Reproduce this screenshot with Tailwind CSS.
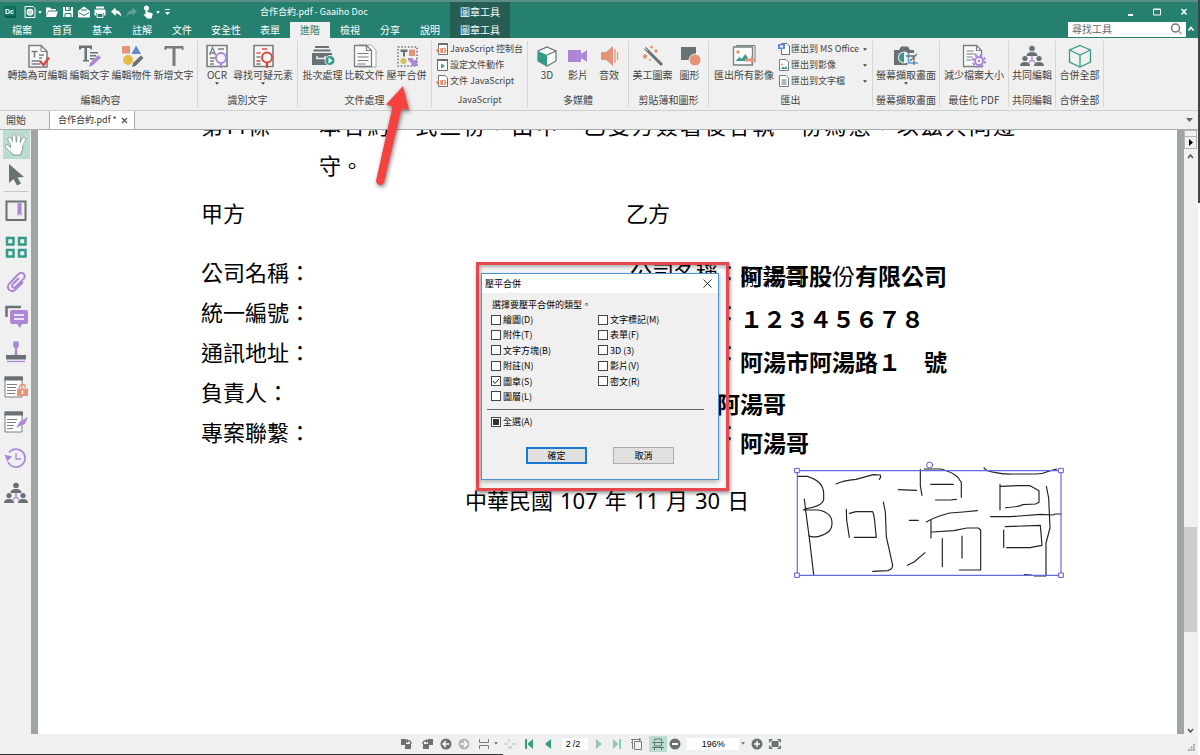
<!DOCTYPE html>
<html lang="zh-Hant">
<head>
<meta charset="utf-8">
<title>合作合約.pdf - Gaaiho Doc</title>
<script src="https://cdn.jsdelivr.net/npm/@tailwindcss/browser@4"></script>
</head>
<body class="h-screen overflow-hidden flex bg-white text-[10px] leading-[14px] text-[#444] font-['Noto_Sans_CJK_TC',sans-serif]">
<svg class="hidden">
  <symbol id="caret" viewBox="0 0 6 4"><path d="M0 0h6L3 4z" fill="currentColor"/></symbol>
  <symbol id="people" viewBox="0 0 24 24"><g fill="#697174"><circle cx="12" cy="4.500" r="2.800"/><path d="M6.500 12q0-4 5.500-4t5.500 4z"/><circle cx="5" cy="14.500" r="2.600"/><path d="M0 22q0-4 5-4t5 4z"/><circle cx="19" cy="14.500" r="2.600"/><path d="M14 22q0-4 5-4t5 4z"/></g><path d="M12 12v4l-3 2.500M12 16l3 2.500" stroke="#ac87d8" stroke-width="1.300" fill="none"/></symbol>
  <symbol id="sheet" viewBox="0 0 24 24"><path d="M3 1.500h12l6 6V23H3z" fill="#fafafa" stroke="#777f81" stroke-width="1.500"/><path d="M15 1.500v6h6" fill="none" stroke="#777f81" stroke-width="1"/></symbol>
</svg>

<div class="flex-1 min-w-0 flex flex-col bg-[#f0f0f0]">
  <!-- Title bar and menu tabs -->
  <header class="bg-[#258070] text-white border-t-2 border-[#5d8f86]">
    <div class="flex h-5 items-stretch">
      <div class="w-[258px] flex items-center pl-[3px]">
        <svg class="w-[14px] h-[14px]" viewBox="0 0 14 14"><path d="M1 1h11l1 2v10H3L1 11z" fill="#0b5b4f"/><path d="M1 1h11v10H1z" fill="#12705f"/><text x="2" y="9" font-size="7" font-weight="700" fill="#fff" font-family="Liberation Sans">Dc</text></svg>
        <button aria-label="新增" class="ml-[7px] flex items-center gap-[2px]"><svg class="w-[12px] h-3" viewBox="0 0 12 12" fill="none" stroke="#fff"><path d="M1 .5h8l2 2v9H1z"/><circle cx="6" cy="6.200" r="2.600" stroke-width="1.600"/><path d="M6 4.500v3.400M4.300 6.200h3.400"/></svg><svg class="w-1 h-[3px]"><use href="#caret"/></svg></button>
        <button aria-label="開啟" class="ml-[3px]"><svg class="w-[13px] h-3" viewBox="0 0 13 12"><path d="M1 10V1.500h4L6.500 3H11v1.500H3.500z" fill="#fff"/><path d="M3.500 5.500H13L11 11H1z" fill="#fff"/></svg></button>
        <button aria-label="儲存" class="ml-1"><svg class="w-3 h-3" viewBox="0 0 12 12"><path d="M1 1h10v10H1z" fill="#fff"/><path d="M3.500 1v3.500h5V1M3 11V7.500h6V11" fill="none" stroke="#258070"/><path d="M7 1v3" stroke="#258070"/></svg></button>
        <button aria-label="郵件" class="ml-1"><svg class="w-3 h-3" viewBox="0 0 12 12"><path d="M0 5 6 .5 12 5v6.500H0z" fill="#fff"/><path d="M1 6.500 6 9.500l5-3" fill="none" stroke="#258070"/><path d="M3 4h6" stroke="#258070"/></svg></button>
        <button aria-label="列印" class="ml-1"><svg class="w-3 h-3" viewBox="0 0 12 12"><path d="M2 .5h8v2H2zM.5 3.500h11v6H10V7H2v2.500H.5z" fill="#fff"/><path d="M3 7.500h6v4H3z" fill="none" stroke="#fff"/></svg></button>
        <button aria-label="復原" class="ml-1"><svg class="w-3 h-3" viewBox="0 0 12 12"><path d="M1 5.500 5.500 1.500v2.500q5.500.5 6 7-2-3.500-6-3.500v2.500z" fill="#fff"/></svg></button>
        <button aria-label="重做" class="ml-1"><svg class="w-3 h-3" viewBox="0 0 12 12"><path d="M11 5.500 6.500 1.500v2.500q-5.500.5-6 7 2-3.500 6-3.500v2.500z" fill="#629f94"/></svg></button>
        <button aria-label="觸控模式" class="ml-1 flex items-center gap-[2px]"><svg class="w-3 h-[14px]" viewBox="0 0 12 14"><circle cx="4.500" cy="3" r="2.500" fill="#fff"/><path d="M3.500 3q1-1 2 0v4l4.500 1q1 .5.500 2L9.500 13.500H5L1.500 9.500q.5-1 2 0z" fill="#fff"/></svg><svg class="w-1 h-[3px]"><use href="#caret"/></svg></button>
        <button aria-label="自訂快速存取" class="ml-[5px]"><svg class="w-[5px] h-[6px]" viewBox="0 0 5 6"><path d="M0 0h5v1H0zM0 3h5L2.500 6z" fill="#fff"/></svg></button>
      </div>
      <div class="w-[192px] flex items-center pl-[2px] text-[9px]">合作合約.pdf - Gaaiho Doc</div>
      <div class="w-15 flex items-center justify-center bg-[#265e54]">圖章工具</div>
      <div class="flex-1 flex items-center justify-end gap-[17px] pr-[9px]">
        <button aria-label="最小化" class="w-[10px] h-3"><svg viewBox="0 0 10 12"><path d="M3 8h5v2H3z" fill="#fff"/></svg></button>
        <button aria-label="最大化" class="w-[10px] h-3"><svg viewBox="0 0 10 12"><path d="M1.500 3h7v6h-7zM1 3.500h8" fill="none" stroke="#fff"/></svg></button>
        <button aria-label="關閉" class="w-[10px] h-3"><svg viewBox="0 0 10 12"><path d="m2.500 3 5 5.500m0-5.500-5 5.500" stroke="#fff" stroke-width="1.500"/></svg></button>
      </div>
    </div>
    <div class="flex h-4 items-stretch justify-between">
      <nav class="flex pl-[2px]">
        <button class="w-10">檔案</button><button class="w-10">首頁</button><button class="w-10">基本</button><button class="w-10">註解</button><button class="w-10">文件</button><button class="w-12">安全性</button><button class="w-10">表單</button><button class="w-10 bg-[#f0f0f0] text-[#258070]">進階</button><button class="w-10">檢視</button><button class="w-10">分享</button><button class="w-10">說明</button><button class="w-15 bg-[#265e54]">圖章工具</button>
      </nav>
      <div class="flex items-center pr-[3px] gap-px pb-[2px]">
        <label class="flex items-center bg-white h-[15px] w-[118px] px-1"><input aria-label="尋找工具" placeholder="尋找工具" class="w-full min-w-0 text-[10px] outline-none text-[#555] placeholder:text-[#666]"><svg class="w-3 h-3 shrink-0" viewBox="0 0 12 12" fill="none"><circle cx="5.500" cy="5" r="4" stroke="#6d7577" stroke-width="1.500"/><path d="m8.500 8 3 3" stroke="#e2886d" stroke-width="1.500"/></svg></label>
        <button aria-label="收合" class="w-[8px]"><svg class="w-[8px] h-[6px]" viewBox="0 0 8 6"><path d="m1.500 4.500 2.500-3 2.500 3" fill="none" stroke="#fff" stroke-width="1.600"/></svg></button>
      </div>
    </div>
  </header>

  <!-- Ribbon -->
  <div class="flex h-[73px] shrink-0 pt-[3px] pb-[3px] pl-1 border-b border-[#d0d0d0] whitespace-nowrap">
    <section class="w-[194px] flex flex-col justify-between items-center border-r border-[#d6d6d6] pt-[3px]">
      <div class="flex gap-[2px]">
        <button class="flex flex-col items-center"><svg class="w-6 h-6" viewBox="0 0 24 24"><use href="#sheet"/><path d="M5.500 7.500h6M8.500 7.500v6M13 11h5M13 14h3M5.500 17h9M5.500 20h9" stroke="#777f81" stroke-width="1.500"/><path d="m14 17 3.500 4L23 13.500" stroke="#d84a45" stroke-width="2.400" fill="none"/></svg>轉換為可編輯</button>
        <button class="flex flex-col items-center"><svg class="w-6 h-6" viewBox="0 0 24 24"><path d="M1 1.500h13v4h-1.500L12 4H9v12h2v1.500H5V16h1.500V4H3.500L3 5.500H1zM12 8h8v1.500h-8zM12 11h6v1.500h-6zM12 14h4v1.500h-4z" fill="#697174"/><path d="m11 23 1-4 8-8 3 2.500-8.500 8z" fill="#ac87d8"/></svg>編輯文字</button>
        <button class="flex flex-col items-center"><svg class="w-6 h-6" viewBox="0 0 24 24"><path d="M2 2h8v7.500H2z" fill="#e3947a"/><path d="m16 1.500 5 8.500H11.500z" fill="#6189c6"/><circle cx="8" cy="16" r="5" fill="#e2bd4c"/><path d="m12 23 1-4 8-7.500 2.500 2.500-8 8z" fill="#697174"/></svg>編輯物件</button>
        <button class="flex flex-col items-center"><svg class="w-6 h-6" viewBox="0 0 24 24"><path d="M2.500 2h19v4H20l-.5-1.500h-6V22h-3V4.500h-6L4 6H2.500z" fill="#777d7e"/></svg>新增文字</button>
      </div><h2>編輯內容</h2>
    </section>
    <section class="w-[100px] flex flex-col justify-between items-center border-r border-[#d6d6d6] pt-[3px]">
      <div class="flex gap-px">
        <button class="w-[30px] flex flex-col items-center"><svg class="w-6 h-6" viewBox="0 0 24 24"><path d="M2 1.500h20v21H2z" fill="#f6f6f6" stroke="#777f81" stroke-width="1.600"/><path d="m4.500 11 3-7.500 3 7.500M5.500 9h4M13 5h6M5 14h5M5 17h4M5 20h4" stroke="#777f81" stroke-width="1.300" fill="none"/><circle cx="16" cy="14" r="5" fill="#f6f6f6" stroke="#ac87d8" stroke-width="2"/><path d="M16 19v5" stroke="#ac87d8" stroke-width="2.500"/></svg>OCR<svg class="w-1 h-[3px]"><use href="#caret"/></svg></button>
        <button class="flex flex-col items-center"><svg class="w-6 h-6" viewBox="0 0 24 24"><path d="M3 1.500h19v21H3z" fill="#f6f6f6" stroke="#777f81" stroke-width="1.600"/><path d="M11 5h5M5.500 9h4M5.500 17h4" stroke="#d84a45" stroke-width="1.500"/><path d="M5.500 13h4M5.500 20h4" stroke="#777f81" stroke-width="1.500"/><circle cx="16" cy="13.500" r="5" fill="#f6f6f6" stroke="#d84a45" stroke-width="2"/><path d="M16 18.500V24" stroke="#d84a45" stroke-width="2.500"/></svg>尋找可疑元素<svg class="w-1 h-[3px]"><use href="#caret"/></svg></button>
      </div><h2>識別文字</h2>
    </section>
    <section class="w-[134px] flex flex-col justify-between items-center border-r border-[#d6d6d6] pt-[3px]">
      <div class="flex gap-[2px]">
        <button class="flex flex-col items-center"><svg class="w-6 h-6" viewBox="0 0 24 24"><path d="M4 3h14M2.500 6.500h17" stroke="#697174" stroke-width="1.800"/><path d="M1 9h20v12H1z" fill="#697174"/><path d="M6 12v2.500h8V12" stroke="#f0f0f0" stroke-width="1.400" fill="none"/><circle cx="19" cy="16.500" r="5" fill="#369a88" stroke="#f0f0f0"/><path d="m17.500 13.500 4 3-4 3z" fill="#fff"/></svg>批次處理</button>
        <button class="flex flex-col items-center"><svg class="w-6 h-6" viewBox="0 0 24 24"><path d="M6 1h12l5 5v17H6z" fill="#fff" stroke="#aaa"/><path d="M1.500 1.500h12l5 5v16h-17z" fill="#fafafa" stroke="#777f81" stroke-width="1.300"/><path d="M13.500 1.500v5h5M4.500 9.500h11M4.500 13h11M4.500 16.500h11M4.500 20h8" stroke="#777f81" stroke-width="1.200" fill="none"/></svg>比較文件</button>
        <button class="flex flex-col items-center"><svg class="w-6 h-6" viewBox="0 0 24 24"><path d="M3 3h19v19H3z" fill="none" stroke="#697174" stroke-width="1.500" stroke-dasharray="1.500 1.800"/><path d="M5.500 5.500h7V8H10v4.500H8V8H5.500z" fill="#697174"/><path d="M14 5.500h6V12h-6z" fill="#e3947a"/><circle cx="8.500" cy="17" r="3" fill="#dfc04f"/><path d="M13 14h4l2.500 2.500L22 15v7h-7l2-2-4-4z" fill="#ac87d8"/></svg>壓平合併</button>
      </div><h2>文件處理</h2>
    </section>
    <section class="w-[96px] flex flex-col justify-between items-center border-r border-[#d6d6d6] text-[9px]">
      <div class="flex flex-col items-start gap-[2px] pt-px">
        <button class="flex items-center gap-[2px]"><svg class="w-[12px] h-[14px]" viewBox="0 0 12 14"><path d="M2.500 1.500h9v11h-9z" fill="#fff" stroke="#697174"/><path d="M2 1h10v2H2z" fill="#697174"/><path d="m3 6-2 2.500L3 11m5-5 2 2.500L8 11M5 6v5m1.500-5v5" stroke="#e2886d" stroke-width="1.400" fill="none"/></svg>JavaScript 控制台</button>
        <button class="flex items-center gap-[2px]"><svg class="w-[12px] h-[14px]" viewBox="0 0 12 14"><path d="M1.500 1.500h10v11h-10z" fill="#fff" stroke="#697174"/><path d="M1 1h11v2H1z" fill="#697174"/><path d="M5 5.500v5L9 8z" fill="#369a88"/></svg>設定文件動作</button>
        <button class="flex items-center gap-[2px]"><svg class="w-[12px] h-[14px]" viewBox="0 0 12 14"><path d="M2.500 1.500H9L11.500 4v8.500h-9z" fill="#fff" stroke="#697174"/><path d="m3 6-2 2.500L3 11m5-5 2 2.500L8 11M5 6v5m1.500-5v5" stroke="#e2886d" stroke-width="1.400" fill="none"/></svg>文件 JavaScript</button>
      </div><h2>JavaScript</h2>
    </section>
    <section class="w-[101px] flex flex-col justify-between items-center border-r border-[#d6d6d6] pt-[3px]">
      <div class="flex gap-px">
        <button class="w-[30px] flex flex-col items-center"><svg class="w-6 h-6" viewBox="0 0 24 24"><path d="m12 3 9 4v10l-9 5-9-5V7z" fill="#fafafa" stroke="#697174" stroke-width="1.200"/><path d="m3 7 9 4v11l-9-5z" fill="#369a88"/><path d="m12 11 9-4" stroke="#697174" stroke-width="1.200"/></svg>3D</button>
        <button class="w-[30px] flex flex-col items-center"><svg class="w-6 h-6" viewBox="0 0 24 24"><path d="M2 6h13v12H2zM15 10l6-4v12l-6-4z" fill="#ac87d8"/></svg>影片</button>
        <button class="w-[30px] flex flex-col items-center"><svg class="w-6 h-6" viewBox="0 0 24 24"><path d="M4 8h5l7-6v20l-7-6H4z" fill="#e3947a"/><path d="M18 5v14M20.500 8v8" stroke="#e3947a" stroke-width="1.300"/></svg>音效</button>
      </div><h2>多媒體</h2>
    </section>
    <section class="w-[80px] flex flex-col justify-between items-center border-r border-[#d6d6d6] pt-[3px]">
      <div class="flex gap-[2px]">
        <button class="flex flex-col items-center"><svg class="w-6 h-6" viewBox="0 0 24 24"><path d="m4 4 17 17" stroke="#697174" stroke-width="3"/><path d="m3.500 3.500 3 3" stroke="#fff" stroke-width="1"/><circle cx="10.500" cy="3" r="1.500" fill="#e3947a"/><circle cx="15" cy="7" r="1.800" fill="#e3947a"/><circle cx="4" cy="12.500" r="2.200" fill="#e3947a"/><circle cx="9" cy="16" r="1" fill="#e3947a"/></svg>美工圖案</button>
        <button class="w-[30px] flex flex-col items-center"><svg class="w-6 h-6" viewBox="0 0 24 24"><path d="M3 3h15v13H3z" fill="#697174"/><circle cx="17" cy="16" r="6" fill="#e3947a" stroke="#f0f0f0"/></svg>圖形</button>
      </div><h2>剪貼簿和圖形</h2>
    </section>
    <section class="w-[164px] flex flex-col justify-between items-center border-r border-[#d6d6d6]">
      <div class="flex gap-1 w-full pl-[5px] pr-1">
        <button class="flex flex-col items-center pt-[3px] self-start"><svg class="w-6 h-6" viewBox="0 0 24 24"><path d="M4 1.500h19v17" fill="none" stroke="#777f81"/><path d="M1.500 3h19v18h-19z" fill="#fafafa" stroke="#777f81" stroke-width="1.300"/><circle cx="6" cy="8" r="1.800" fill="#e3947a"/><path d="m3.500 17 4-4 2 2 4-5 4 7z" fill="#369a88"/><path d="M13 14.500h6V12l4.500 4-4.500 4v-2.500h-6z" fill="#e3947a"/></svg>匯出所有影像</button>
        <div class="flex-1 flex flex-col gap-[2px] pt-px pr-px text-[9px]">
          <button class="flex items-center gap-px"><svg class="w-[12px] h-[14px]" viewBox="0 0 12 14"><path d="M3.500 1.500H9l2.500 2.500v8.500h-8z" fill="#fff" stroke="#697174"/><path d="M0 2h7v5H0z" fill="#5d8ae0"/><path d="M2 3.500h3v2H2z" fill="#fff"/></svg>匯出到 MS Office<svg class="w-1 h-[3px] ml-auto"><use href="#caret"/></svg></button>
          <button class="flex items-center gap-px"><svg class="w-[12px] h-[14px]" viewBox="0 0 12 14"><path d="M1.500 1.500H8L10.500 4v8.500h-9z" fill="#fff" stroke="#777f81"/><path d="m3 11 2-2.500L6.500 10 8 8l1.500 3z" fill="#369a88"/><circle cx="4" cy="6.500" r="1" fill="#e2886d"/></svg>匯出到影像<svg class="w-1 h-[3px] ml-auto"><use href="#caret"/></svg></button>
          <button class="flex items-center gap-px"><svg class="w-[12px] h-[14px]" viewBox="0 0 12 14"><path d="M1.500 1.500H8L10.500 4v8.500h-9z" fill="#fff" stroke="#777f81"/><path d="M3.500 6h5M3.500 8h5M3.500 10h5" stroke="#697174"/></svg>匯出到文字檔<svg class="w-1 h-[3px] ml-auto"><use href="#caret"/></svg></button>
        </div>
      </div><h2>匯出</h2>
    </section>
    <section class="w-[67px] flex flex-col justify-between items-center border-r border-[#d6d6d6] pt-[3px]">
      <button class="flex flex-col items-center"><svg class="w-6 h-6" viewBox="0 0 24 24"><path d="M0 6h5l2-3.500h7L16 6h4v15H0z" fill="#697174"/><circle cx="10" cy="13.500" r="6" fill="#f0f0f0"/><path d="M10 8.500a5 5 0 0 0 0 10z" fill="#369a88"/><path d="M11.500 9H24v15H14z" fill="#f0f0f0"/><path d="M14.500 9v10H24" stroke="#55a4d8" stroke-width="1.600" fill="none"/><path d="M12 12h8v9M16 17l7-7" stroke="#697174" stroke-width="1.300" fill="none"/></svg>螢幕擷取畫面<svg class="w-1 h-[3px]"><use href="#caret"/></svg></button><h2>螢幕擷取畫面</h2>
    </section>
    <section class="w-[69px] flex flex-col justify-between items-center border-r border-[#d6d6d6] pt-[3px]">
      <button class="flex flex-col items-center"><svg class="w-6 h-6" viewBox="0 0 24 24"><path d="M1.500 1.500h13l5 5v16h-18z" fill="#fafafa" stroke="#777f81" stroke-width="1.300"/><path d="M14.500 1.500v5h5M4.500 7h7M4.500 10h10M4.500 13h6M4.500 16h5" stroke="#777f81" stroke-width="1.200" fill="none"/><circle cx="17" cy="17" r="6" fill="none" stroke="#ac87d8" stroke-width="2.200" stroke-dasharray="2.400 2.300"/><circle cx="17" cy="17" r="4" fill="#f6f6f6" stroke="#ac87d8" stroke-width="2"/><circle cx="17" cy="17" r="1.300" fill="#ac87d8"/></svg>減少檔案大小</button><h2>最佳化 PDF</h2>
    </section>
    <section class="w-[47px] flex flex-col justify-between items-center border-r border-[#d6d6d6] pt-[3px]">
      <button class="flex flex-col items-center"><svg class="w-6 h-6"><use href="#people"/></svg>共同編輯</button><h2>共同編輯</h2>
    </section>
    <section class="w-[48px] flex flex-col justify-between items-center border-r border-[#d6d6d6] pt-[3px]">
      <button class="flex flex-col items-center"><svg class="w-6 h-6" viewBox="0 0 24 24"><path d="m12 1.500 10.500 4.500v12L12 23 1.500 18V6zM1.500 6 12 11l10.500-5M12 11v12" fill="none" stroke="#369a88" stroke-width="1.300"/></svg>合併全部</button><h2>合併全部</h2>
    </section>
  </div>

  <!-- Document tabs -->
  <div class="flex items-stretch h-[19px] shrink-0 border-b border-[#a9adad]">
    <button class="w-[49px] pl-[6px] text-left">開始</button>
    <div class="flex items-center gap-1 bg-white border-x border-[#a9adad] pl-2 pr-[6px] text-[9px] text-[#333]"><button>合作合約.pdf *</button><button aria-label="關閉分頁"><svg class="w-[7px] h-[7px]" viewBox="0 0 7 7"><path d="m1 1 5 5m0-5L1 6" stroke="#555" stroke-width="1.200"/></svg></button></div>
    <button aria-label="分頁清單" class="ml-auto mr-[5px]"><svg class="w-[7px] h-1" viewBox="0 0 7 4"><path d="M0 0h7L3.500 4z" fill="#666"/></svg></button>
  </div>

  <div class="flex-1 min-h-0 flex">
    <!-- Side tools -->
    <aside class="w-[31px] flex flex-col items-center shrink-0 pl-px">
      <button aria-label="手形" class="w-[27px] h-[29px] bg-[#bbdcd3] flex items-center justify-center"><svg class="w-6 h-6" viewBox="0 0 24 24" fill="none" stroke-linecap="round" stroke-linejoin="round"><g stroke="#7d9a94" stroke-width="4.200"><path d="M8 11 5.500 6M10.500 10l-.5-6.500M14 10l1-6.500M17 11l3-5M8 18l-5-4.500"/></g><path d="M7.500 10q5-2 10 0l1.500 5-2.500 7H9l-3-5z" fill="#fff" stroke="#7d9a94"/><g stroke="#fff" stroke-width="2.800"><path d="M8 11 5.500 6M10.500 11 10 3.500M14 11l1-7.500M17 12l3-6M9 19l-6-5.500"/></g></svg></button>
      <button aria-label="選取" class="h-8 flex items-center"><svg class="w-5 h-6" viewBox="0 0 20 24"><path d="M3 1v19l4.500-4 3.500 6.500 4-2-3.500-6 6.500-.5z" fill="#697174"/></svg></button>
      <hr class="w-6 border-[#c8c8c8]">
      <button aria-label="書籤" class="h-[38px] flex items-center"><svg class="w-6 h-6" viewBox="0 0 24 24"><path d="M2.500 2.500h19v18.500h-19z" fill="none" stroke="#697174" stroke-width="2"/><path d="M13.500 4h4v13l-2-2-2 2z" fill="#ac87d8"/></svg></button>
      <button aria-label="縮圖" class="h-[34px] flex items-center"><svg class="w-6 h-6" viewBox="0 0 24 24" fill="none" stroke="#369a88" stroke-width="2.500"><path d="M3 3h6.500v6.500H3zM15 3h6.500v6.500H15zM3 15h6.500v6.500H3zM15 15h6.500v6.500H15z"/></svg></button>
      <button aria-label="附件" class="h-[35px] flex items-center"><svg class="w-6 h-6" viewBox="0 0 24 24"><path d="m19 12-7.500 7.500q-3 3-6 .5t-.5-6L14 4.500q3-3 5.500-.8t0 5.200L11.500 17q-1.500 1.200-2.800.2t0-3L15 8" fill="none" stroke="#ac87d8" stroke-width="2"/></svg></button>
      <button aria-label="註解" class="h-[35px] flex items-center"><svg class="w-6 h-6" viewBox="0 0 24 24"><path d="M2.500 12V2H17" fill="none" stroke="#697174" stroke-width="2.500"/><path d="M8 5h14q2 0 2 2v10q0 2-2 2h-4l-2 4-3-4H8q-2 0-2-2V7q0-2 2-2z" fill="#ac87d8"/><path d="M10 10h10M10 14h10" stroke="#fff" stroke-width="1.500"/></svg></button>
      <button aria-label="圖章" class="h-[35px] flex items-center"><svg class="w-6 h-6" viewBox="0 0 24 24"><path d="M9 4q0-3 3-3t3 3q0 3-2 5l.5 6h-3L11 9Q9 7 9 4z" fill="#ac87d8"/><path d="M2 15h20v4.500H2z" fill="#697174"/><path d="M3 21.500h18" stroke="#ac87d8" stroke-width="1.300"/></svg></button>
      <button aria-label="安全性" class="h-[35px] flex items-center"><svg class="w-6 h-6" viewBox="0 0 24 24"><path d="M1 2h17v20H1z" fill="#fff" stroke="#777f81"/><path d="M.5 1.500H19v4H.5z" fill="#697174"/><path d="M3 9.500h10M3 12.500h9M3 15.500h9M3 18.500h8" stroke="#777f81"/><path d="M13 13.500h11V21H13z" fill="#e3947a"/><path d="M15.500 13q0-3.500 3-3.500t3 3.500" stroke="#e3947a" stroke-width="1.300" fill="none"/><path d="M18.500 15.500v3.500" stroke="#fff" stroke-width="1.500"/></svg></button>
      <button aria-label="簽名" class="h-[36px] flex items-center"><svg class="w-6 h-6" viewBox="0 0 24 24"><path d="M1 2h17v20H1z" fill="#fff" stroke="#777f81"/><path d="M.5 1.500H19v4H.5z" fill="#697174"/><path d="M3 9.500h10M3 12.500h9M3 15.500h7M3 18.500h6" stroke="#777f81"/><path d="m12 18 4-6.500L24 7l-3 7-6 2.500z" fill="#ac87d8"/></svg></button>
      <button aria-label="歷程" class="h-[35px] flex items-center"><svg class="w-6 h-6" viewBox="0 0 24 24" fill="none" stroke="#ac87d8" stroke-width="1.700"><path d="M5 6.500A9 9 0 1 1 4 16"/><path d="M12 7v6h5" stroke-width="1.300"/><path d="m2 10 1.500 4L6.500 11z" fill="#ac87d8"/></svg></button>
      <button aria-label="共用" class="h-[35px] flex items-center"><svg class="w-6 h-6"><use href="#people"/></svg></button>
    </aside>

    <!-- Page view -->
    <main class="relative flex-1 min-w-0 overflow-hidden bg-white border-x-[7px] border-[#9fa5a5] text-black text-[22px] leading-10 font-['Noto_Sans','Noto_Sans_CJK_TC',sans-serif] whitespace-nowrap">
      <div class="-mt-[25px] pl-[163px]">
        <div class="flex">
          <div class="w-[118px]">第11條</div>
          <div class="w-[696px]"><p class="[text-align-last:justify]">本合約一式三份，由甲、乙雙方簽署後各執一份為憑，以茲共同遵</p><p>守。</p></div>
        </div>
        <div class="flex mt-2"><h3 class="w-[425px]">甲方</h3><h3>乙方</h3></div>
        <div class="flex mt-[19px]">
          <div class="w-[429px]"><p>公司名稱：</p><p>統一編號：</p><p>通訊地址：</p><p>負責人：</p><p>專案聯繫：</p></div>
          <div class="w-[110px]"><p>公司名稱：</p><p>統一編號：</p><p>通訊地址：</p><p>負責人：</p><p>專案聯繫：</p></div>
          <div class="text-[23px] font-bold pt-[3px] font-['Noto_Sans_CJK_TC',sans-serif]">
            <p class="relative h-[43px]">阿湯哥股<span class="font-normal">份</span>有限公司<span aria-hidden="true" class="absolute left-0 top-0 font-light text-[22px]">偷款哥</span></p>
            <p class="h-[43px]">１２３４５６７８</p>
            <p class="h-[42px]">阿湯市阿湯路１　號</p>
            <p class="h-[39px] -ml-[23px]">阿湯哥</p>
            <p class="h-10">阿湯哥</p>
          </div>
        </div>
        <p class="flex gap-[7px] pl-[264px] mt-[18px]"><span>中華民國</span><span>107</span><span>年</span><span>11</span><span>月</span><span>30</span><span>日</span></p>
      </div>

      <svg class="absolute left-[742px] top-[320px] w-[300px] h-[140px]" viewBox="0 0 900 420" fill="none" stroke="#222" stroke-width="3.500" stroke-linecap="round" stroke-linejoin="round">
        <path d="M52 79h30q48 15 49 50v20q-5 20-53 27l-8 4h45q42 8 41 40 0 30-40 39-20 4-30-2M73 147l4 35 12 90 12 102M168 102q20-10 60-14l52-14 20 1q5 5-2 13M199 178l1 32 8 52M208 190l20-5h50q5 10 7 40l4 37h-66M310 156l6 30 3 75 8 35 11 50q0 12-15 16l-45 2M355 119l55 2M421 58v50l5 28M433 57h50q35 10 50 24l11 16v45M452 103h68M466 150h45l18-2M388 211h27M439 216q25-15 70-27l40-3 43-4M453 212v52M456 246l65-4 40-8h34l7 6v120h-64M487 266v84M546 258v66M382 346l20-10 33-28M612 53q5 10 35 15 20 5 50 4h70q20 0 35-7l28-8M660 103v76M662 109l50-2h38q15 8 27 15v35l-10 5-40 2q-10 7-50 9M799 109l7 35 4 90-12 45v97M632 200h60l90-7 35 2 10-3h17M671 240v52M676 230l105-4 5 60-36 7h-70M733 374l20 1 12 3h33"/>
        <path d="M52 62h791v314H52z" stroke="#6767df"/>
        <g fill="#fff" stroke="#5b5bdc" stroke-width="3"><path d="M45 55h13v13H45zM837 55h13v13h-13zM45 369h13v13H45zM837 369h13v13h-13z"/><circle cx="449" cy="45" r="9"/></g>
      </svg>

      <!-- Highlight frame round the dialog -->
      <div class="absolute left-[438px] top-[132px] w-[253px] h-[229px] border-3 border-[#e5494d] shadow-[1px_2px_4px_rgba(0,0,0,0.45),inset_1px_2px_4px_rgba(0,0,0,0.35)]"></div>
      <div role="dialog" aria-labelledby="dlg" class="absolute left-[443px] top-[143px] w-[238px] h-[207px] bg-[#f0f0f0] border border-[#4a94cf] shadow-[0_2px_6px_rgba(0,0,0,0.35)] text-[9px] leading-[15px] font-['Noto_Sans_CJK_TC',sans-serif]">
        <div class="flex items-center justify-between h-[19px] bg-white pl-[3px] pr-[6px]"><h2 id="dlg">壓平合併</h2><button aria-label="關閉"><svg class="w-[9px] h-[9px]" viewBox="0 0 9 9"><path d="m.5.5 8 8m0-8-8 8" stroke="#333"/></svg></button></div>
        <div class="pl-[9px]">
          <p class="pt-1 pl-px">選擇要壓平合併的類型。</p>
          <div class="grid grid-cols-[107px_1fr] grid-rows-[repeat(6,15px)] content-between h-[92px]">
            <label class="flex items-center gap-[2px]"><input type="checkbox" class="appearance-none w-[10px] h-[10px] bg-white border border-[#444]">繪圖(D)</label>
            <label class="flex items-center gap-[2px]"><input type="checkbox" class="appearance-none w-[10px] h-[10px] bg-white border border-[#444]">文字標記(M)</label>
            <label class="flex items-center gap-[2px]"><input type="checkbox" class="appearance-none w-[10px] h-[10px] bg-white border border-[#444]">附件(T)</label>
            <label class="flex items-center gap-[2px]"><input type="checkbox" class="appearance-none w-[10px] h-[10px] bg-white border border-[#444]">表單(F)</label>
            <label class="flex items-center gap-[2px]"><input type="checkbox" class="appearance-none w-[10px] h-[10px] bg-white border border-[#444]">文字方塊(B)</label>
            <label class="flex items-center gap-[2px]"><input type="checkbox" class="appearance-none w-[10px] h-[10px] bg-white border border-[#444]">3D (3)</label>
            <label class="flex items-center gap-[2px]"><input type="checkbox" class="appearance-none w-[10px] h-[10px] bg-white border border-[#444]">附註(N)</label>
            <label class="flex items-center gap-[2px]"><input type="checkbox" class="appearance-none w-[10px] h-[10px] bg-white border border-[#444]">影片(V)</label>
            <label class="relative flex items-center gap-[2px]"><input type="checkbox" checked class="peer appearance-none w-[10px] h-[10px] bg-white border border-[#444]"><svg class="hidden peer-checked:block absolute left-0 w-[10px] h-[10px]" viewBox="0 0 10 10"><path d="m2 5 2 2.500L8 3" fill="none" stroke="#222"/></svg>圖章(S)</label>
            <label class="flex items-center gap-[2px]"><input type="checkbox" class="appearance-none w-[10px] h-[10px] bg-white border border-[#444]">密文(R)</label>
            <label class="flex items-center gap-[2px]"><input type="checkbox" class="appearance-none w-[10px] h-[10px] bg-white border border-[#444]">圖層(L)</label>
          </div>
        </div>
        <hr class="mt-[5px] ml-[5px] mr-[14px] border-[#666]">
        <label class="relative flex items-center gap-[2px] ml-[9px] mt-1"><input id="all" type="checkbox" class="peer appearance-none w-[10px] h-[10px] bg-white border border-[#444]"><svg class="hidden peer-indeterminate:block absolute left-[2px] w-[6px] h-[6px]" viewBox="0 0 6 6"><path d="M0 0h6v6H0z" fill="#333"/></svg>全選(A)</label>
        <div class="flex mt-[18px] ml-11 gap-[26px]"><button class="w-[61px] h-[17px] flex items-center justify-center bg-[#e1e1e1] border-2 border-[#1b78cf]">確定</button><button class="w-[61px] h-[17px] flex items-center justify-center bg-[#e1e1e1] border border-[#adadad]">取消</button></div>
      </div>
    </main>

    <!-- Vertical scroll bar -->
    <div class="w-[14px] shrink-0 flex flex-col items-center pr-[1px]">
      <div class="w-full h-[7px] border border-[#b5b5b5]"></div>
      <button aria-label="展開窗格" class="w-full h-3 border border-t-0 border-[#b5b5b5] flex items-center justify-center"><svg class="w-1 h-[7px]" viewBox="0 0 4 7"><path d="M0 0v7l4-3.500z" fill="#000"/></svg></button>
      <button aria-label="向上捲動" class="h-[14px]"><svg class="w-[7px] h-[5px]" viewBox="0 0 7 5"><path d="m1 4 2.500-3L6 4" fill="none" stroke="#555" stroke-width="1.500"/></svg></button>
      <div class="flex-1 w-full flex flex-col"><div class="grow-[364]"></div><div class="grow-[105] bg-[#cdcdcd]"></div><div class="grow-[94]"></div></div>
      <button aria-label="向下捲動" class="h-2"><svg class="w-[7px] h-[5px]" viewBox="0 0 7 5"><path d="M1 1l2.500 3L6 1" fill="none" stroke="#555" stroke-width="1.500"/></svg></button>
    </div>
  </div>

  <!-- Status bar -->
  <footer class="relative h-[21px] shrink-0 flex items-center justify-center text-[#697174] pb-[2px]">
    <div class="flex items-center gap-[6px] -ml-[17px] text-[9px] font-['Liberation_Sans','Noto_Sans_CJK_TC',sans-serif]">
      <button aria-label="向左旋轉"><svg class="w-[14px] h-3" viewBox="0 0 14 12" fill="#697174"><path d="M1 1h5v6H1zM5 6h6v5H5z"/><path d="M7 3q4-1 4 3" fill="none" stroke="#697174" stroke-width="1.500"/><path d="M4.500 3 8 1v4z"/></svg></button>
      <button aria-label="向右旋轉"><svg class="w-[14px] h-3" viewBox="0 0 14 12" fill="#697174"><path d="M8 1h5v6H8zM3 6h6v5H3z"/><path d="M7 3q-4-1-4 3" fill="none" stroke="#697174" stroke-width="1.500"/><path d="M9.500 3 6 1v4z"/></svg></button>
      <button aria-label="上一檢視"><svg class="w-3 h-3" viewBox="0 0 12 12"><circle cx="6" cy="6" r="5.500" fill="#697174"/><path d="m6 3-3 3 3 3M3 6h6.500" stroke="#fff" stroke-width="1.500" fill="none"/></svg></button>
      <button aria-label="下一檢視"><svg class="w-3 h-3" viewBox="0 0 12 12"><circle cx="6" cy="6" r="5.500" fill="#b5b8b9"/><path d="m6 3 3 3-3 3M9 6H2.500" stroke="#fff" stroke-width="1.500" fill="none"/></svg></button>
      <button aria-label="頁面配置" class="flex items-center gap-1 pl-[2px]"><svg class="w-3 h-3" viewBox="0 0 12 12"><path d="M1.500 1v3.500h9V1M1.500 11V7.500h9V11" fill="none" stroke="#777f81"/></svg><svg class="w-1 h-[3px]"><use href="#caret"/></svg></button>
      <button aria-label="分割"><svg class="w-3 h-3" viewBox="0 0 12 12"><path d="M0 6h4M8 6h4M5 1v3M7 8v3M5 8v3" stroke="#bbb"/></svg></button>
      <button aria-label="第一頁" class="pl-[2px]"><svg class="w-[10px] h-3" viewBox="0 0 10 12"><path d="M1 1h2v10H1zM9 1v10L3.500 6z" fill="#369a88"/></svg></button>
      <button aria-label="上一頁" class="px-1"><svg class="w-2 h-3" viewBox="0 0 8 12"><path d="M7 1v10L1 6z" fill="#369a88"/></svg></button>
      <label class="flex items-center bg-white h-3 text-black"><input aria-label="頁碼" value="2" class="w-[11px] pl-1 outline-none">/2<span class="w-2"></span></label>
      <button aria-label="下一頁" class="px-px"><svg class="w-2 h-3" viewBox="0 0 8 12"><path d="M1 1v10l6-5z" fill="#8fc9bd"/></svg></button>
      <button aria-label="最後一頁" class="pl-[2px]"><svg class="w-[10px] h-3" viewBox="0 0 10 12"><path d="M7 1h2v10H7zM1 1v10l5.500-5z" fill="#8fc9bd"/></svg></button>
      <button aria-label="符合頁面" class="pl-[3px]"><svg class="w-3 h-3" viewBox="0 0 12 12" fill="none" stroke="#777f81"><path d="M3.500 3.500h7v8h-7zM1.500 2v9M0 1.500h10M2 3l-2 2M8 0l2 1.500L8 3"/></svg></button>
      <div class="flex items-center gap-[2px]">
        <button aria-label="符合寬度" class="w-[18px] h-4 flex items-center justify-center bg-[#bbdcd3]"><svg class="w-[14px] h-3" viewBox="0 0 14 12" fill="none" stroke="#697174"><path d="M3.500 3.500V1h7v2.500M1 4.500h12M3.500 5v3h7V5M1 9.500h12M3.500 9.500V12M10.500 9.500V12"/></svg></button>
        <button aria-label="縮小"><svg class="w-3 h-3" viewBox="0 0 12 12"><circle cx="6" cy="6" r="5.500" fill="#697174"/><path d="M3 6h6" stroke="#fff" stroke-width="2"/></svg></button>
      </div>
      <label class="flex items-center gap-[2px]"><input aria-label="縮放比例" value="196%" class="w-[52px] h-3 bg-white text-center text-black outline-none"><svg class="w-1 h-[3px]"><use href="#caret"/></svg></label>
      <button aria-label="放大"><svg class="w-3 h-3" viewBox="0 0 12 12"><circle cx="6" cy="6" r="5.500" fill="#697174"/><path d="M3 6h6M6 3v6" stroke="#fff" stroke-width="1.500"/></svg></button>
      <button aria-label="全螢幕"><svg class="w-3 h-3" viewBox="0 0 12 12" fill="#697174"><path d="M2.500 3h7v6h-7zM0 1h4L0 5zM12 1H8l4 4zM0 11h4L0 7zM12 11H8l4-4z"/></svg></button>
    </div>
    <svg class="absolute right-[3px] bottom-1 w-[7px] h-[7px]" viewBox="0 0 7 7" fill="#aaa"><path d="M5 0h2v2H5zM5 2.500h2v2H5zM2.500 2.500h2v2h-2zM5 5h2v2H5zM2.500 5h2v2h-2zM0 5h2v2H0z"/></svg>
    <div class="absolute left-0 bottom-0 w-[42%] h-px bg-[#333]"></div>
  </footer>
</div>
<div class="w-[2px] shrink-0 bg-white"><div class="h-[203px] bg-[#3f4446]"></div></div>

<!-- Arrow pointing at the flatten command -->
<svg class="absolute left-[365px] top-[80px] w-[60px] h-[115px] pointer-events-none drop-shadow-[1px_2px_2px_rgba(0,0,0,0.5)]" viewBox="365 80 60 115"><path d="M403 86 386 104.500 392.500 106.500 376 181q1 4 4 4t4-2.500L401.500 108.500 409 110z" fill="#f6423f"/></svg>
<script>document.getElementById('all').indeterminate = true;</script>
</body>
</html>
